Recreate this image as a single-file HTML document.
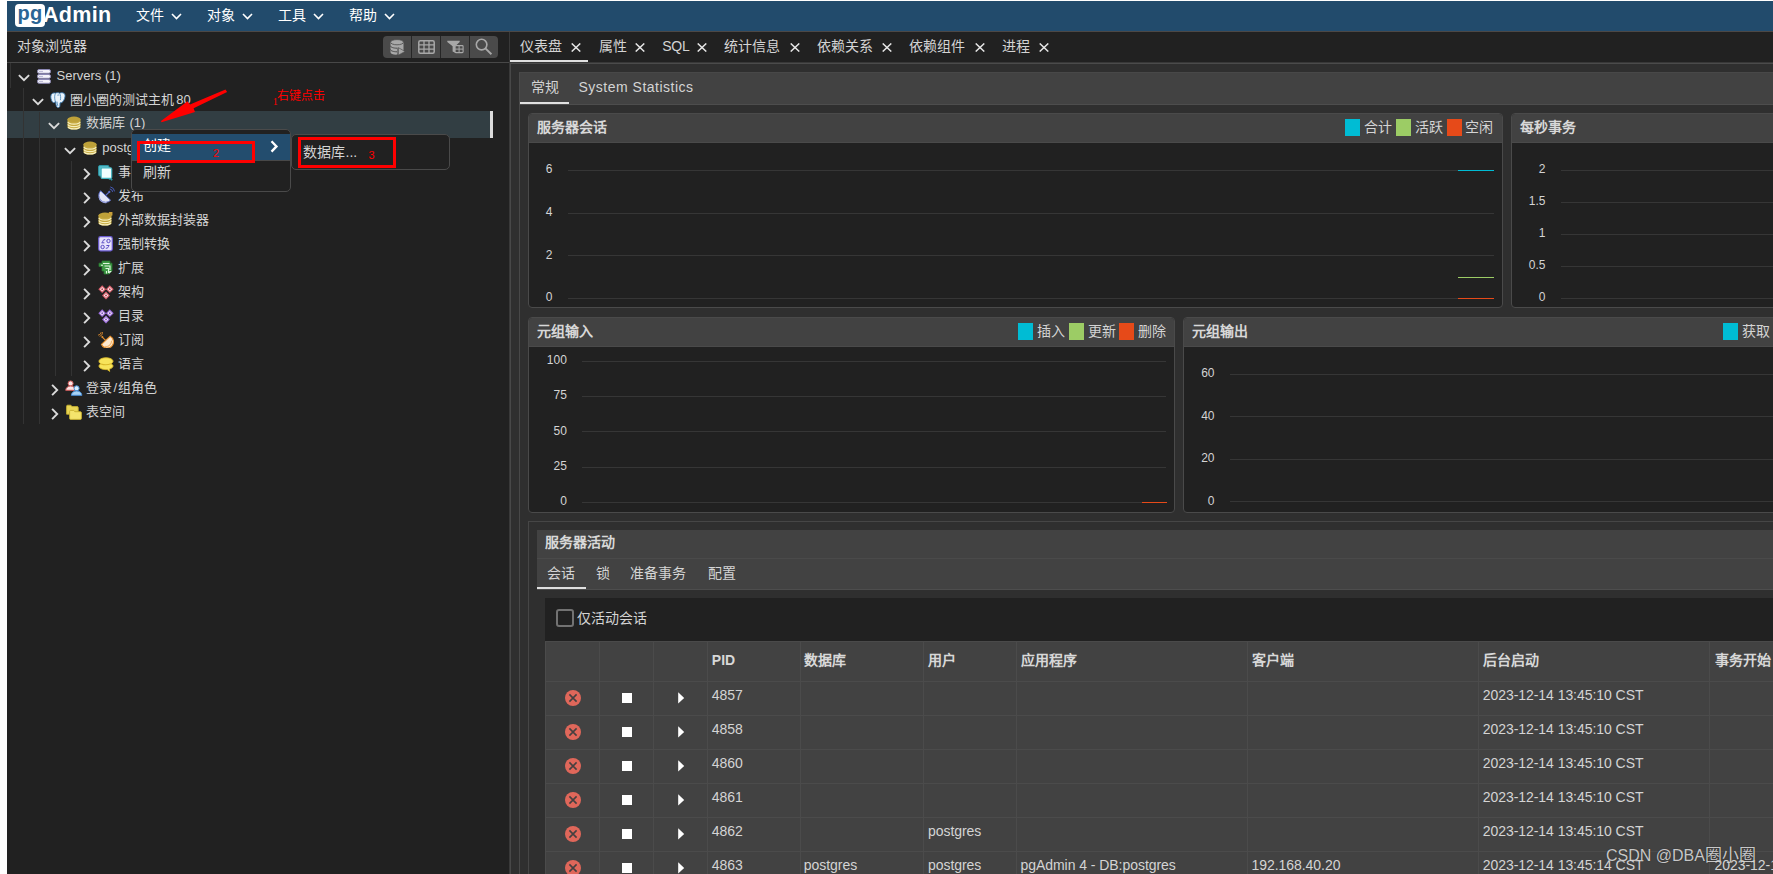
<!DOCTYPE html>
<html lang="zh-CN"><head><meta charset="utf-8"><title>pgAdmin 4</title>
<style>
*{box-sizing:border-box;}
html,body{margin:0;padding:0;background:#ffffff;}
body{width:1773px;height:874px;overflow:hidden;position:relative;font-family:"Liberation Sans",sans-serif;font-size:14px;color:#d4d4d4;line-height:1;}
#app{position:absolute;left:7px;top:1px;width:1766px;height:873px;background:#212121;overflow:hidden;}
#app div,#app span,#app i,#app svg{position:absolute;}
#app b{font-weight:bold;}
/* top nav */
#nav{left:0;top:0;width:1766px;height:31px;background:#224b6c;border-bottom:1px solid #4c4846;z-index:5;}
#logo-box{left:8px;top:3px;width:30px;height:23px;background:#fff;border-radius:4px;}
#logo-pg{left:10.5px;top:-1.5px;font-weight:bold;font-size:20px;line-height:26px;color:#2a6595;letter-spacing:.4px;}
#logo-admin{left:36px;top:2px;font-weight:bold;font-size:21.5px;line-height:24px;color:#fff;letter-spacing:.3px;}
.menu{top:4.5px;height:18px;line-height:18px;font-size:14px;color:#fff;white-space:nowrap;}
.menu svg{top:7px;left:35px;}
/* left panel */
#left{left:0;top:30px;width:502px;height:843px;background:#212121;}
#left-title{left:10px;top:7px;font-size:14px;line-height:16px;color:#d4d4d4;white-space:nowrap;}
#left-hr{left:0;top:31px;width:503px;height:1px;background:#484848;}
#tb{left:376px;top:5px;width:115px;height:22px;background:#4a4a4a;border-radius:4px;overflow:hidden;}
#tb i{top:0;width:1px;height:22px;background:#262626;}
.row{left:0;width:483px;height:24px;line-height:24px;font-size:13px;color:#d4d4d4;white-space:nowrap;}
.row .t{top:0;height:24px;}
.sel{left:0;width:483px;background:#323e43;}
.selbar{width:3px;background:#dcdcdc;}
.guide{width:1px;background:#333;}
/* splitter */
#split{left:502px;top:30px;width:1px;height:843px;background:#393939;}
/* right */
#right{left:503px;top:30px;width:1263px;height:843px;background:#2f2f2f;}
#tabs{left:0;top:0;width:1263px;height:31px;background:#212121;}
#tabline{left:0;top:31px;width:1263px;height:2px;background:#4b4b4b;border-top:1px solid #383838;}
.tab{top:0;height:32px;font-size:14px;line-height:31px;color:#d4d4d4;white-space:nowrap;}
.tab svg{top:11.5px;}
.uline{height:2px;background:#e0e0e0;}
#dashborder{left:0;top:33px;width:1px;height:810px;background:#484848;}
#subtabs{left:9px;top:41px;width:1254px;height:33px;background:#424242;border-left:1px solid #4a4a4a;border-top:1px solid #484848;border-bottom:1px solid #4d4d4d;}
#subline{left:9px;top:74px;width:1px;height:770px;background:#484848;}
.stab{top:0;height:32px;line-height:28px;font-size:14px;white-space:nowrap;color:#d4d4d4;}
.card{background:#212121;border:1px solid #4a4a4a;border-radius:4px;overflow:hidden;}
.card .hd{left:0;top:0;right:0;height:29px;background:#424242;border-bottom:1px solid #4a4a4a;}
.card .ttl{left:8px;top:-1px;font-weight:bold;font-size:14px;line-height:28px;white-space:nowrap;color:#d8d8d8;}
.lg{top:5px;width:15px;height:17px;}
.lt{top:-1px;line-height:28px;font-size:14px;white-space:nowrap;color:#d4d4d4;}
.gl{height:1px;background:#363636;}
.yl{font-size:12px;line-height:14px;height:14px;text-align:right;white-space:nowrap;color:#d4d4d4;}
.sl{height:1px;}
/* activity */
#act{left:17px;top:490px;width:1260px;height:360px;background:#2f2f2f;border:1px solid #464646;}
#acthd{left:8px;top:8px;width:1250px;height:60px;background:#424242;border-bottom:1px solid #4d4d4d;}
#acthd .sep{left:0;top:28px;width:1250px;height:1px;background:#4a4a4a;}
.atab{top:29px;height:29px;line-height:28px;font-size:14px;white-space:nowrap;}
#band{left:16px;top:76px;width:1242px;height:43px;background:#212121;}
#cb{left:11px;top:11.5px;width:18px;height:18px;border:2px solid #727272;border-radius:3px;background:#212121;}
#cbl{left:32px;top:12px;line-height:16px;font-size:14px;white-space:nowrap;}
#tbl{left:16px;top:119px;width:1242px;height:240px;background:#424242;border-top:1px solid #4a4a4a;}
.vl{top:0;width:1px;height:240px;background:#4b4b4b;}
.hl{left:0;width:1242px;height:1px;background:#4b4b4b;}
.th{top:-1px;height:40px;line-height:38px;font-weight:bold;font-size:14px;white-space:nowrap;color:#d8d8d8;}
.td{height:34px;line-height:28px;font-size:14px;white-space:nowrap;color:#d4d4d4;letter-spacing:-.05px;}
.ic-x{width:16px;height:16px;}
.ic-s{width:10px;height:10px;background:#fff;}
/* ctx menu */
.ctx{background:#212121;border:1px solid #4a4a4a;border-radius:5px;overflow:hidden;}
.ctx .it{left:0;height:26px;line-height:26px;font-size:14px;white-space:nowrap;}
.redbox{border:3px solid #ff0000;}
.red{color:#ff0000;white-space:nowrap;}
#wm{font-size:16px;line-height:20px;color:rgba(238,238,238,.82);white-space:nowrap;text-shadow:0 0 1px rgba(0,0,0,.6);}
</style></head><body>
<div id="app">
<div id="nav"><div id="logo-box"></div><div id="logo-pg">pg</div><div id="logo-admin">Admin</div>
<div class="menu" style="left:128.5px">文件<svg width="11" height="7" viewBox="0 0 11 7"><path d="M1 1l4.5 4.5L10 1" fill="none" stroke="#fff" stroke-width="1.6"/></svg></div>
<div class="menu" style="left:199.5px">对象<svg width="11" height="7" viewBox="0 0 11 7"><path d="M1 1l4.5 4.5L10 1" fill="none" stroke="#fff" stroke-width="1.6"/></svg></div>
<div class="menu" style="left:270.5px">工具<svg width="11" height="7" viewBox="0 0 11 7"><path d="M1 1l4.5 4.5L10 1" fill="none" stroke="#fff" stroke-width="1.6"/></svg></div>
<div class="menu" style="left:341.5px">帮助<svg width="11" height="7" viewBox="0 0 11 7"><path d="M1 1l4.5 4.5L10 1" fill="none" stroke="#fff" stroke-width="1.6"/></svg></div>
</div>
<div id="left">
<div id="left-title">对象浏览器</div>
<div id="tb"><i style="left:28px"></i><i style="left:57px"></i><i style="left:86px"></i>
<svg style="left:6.5px;top:2.5px" width="16" height="17" viewBox="0 0 16 17"><path d="M.5 3.2v10c0 1.4 2.4 2.5 5.5 2.5.5 0 1-.1 1.5-.1V8.4l6 3.3V3.2z" fill="#a8a8a8"/><ellipse cx="7" cy="3.2" rx="6.5" ry="2.6" fill="#a8a8a8" stroke="#4a4a4a" stroke-width=".8"/><path d="M.5 6.8c0 1.4 2.9 2.4 6.5 2.4M.5 10.4c0 1.4 2.9 2.4 6.5 2.4" fill="none" stroke="#4a4a4a" stroke-width="1"/><path d="M8.3 8.6l6.7 3.8-6.7 3.8z" fill="#a8a8a8" stroke="#4a4a4a" stroke-width=".6"/></svg>
<svg style="left:35px;top:4px" width="17" height="14" viewBox="0 0 17 14"><rect x=".8" y=".8" width="15.4" height="12.4" rx="1.5" fill="none" stroke="#a8a8a8" stroke-width="1.5"/><path d="M1 4.9h15M1 9.1h15M6 1v12M11 1v12" stroke="#a8a8a8" stroke-width="1.3"/></svg>
<svg style="left:64px;top:4px" width="17" height="15" viewBox="0 0 17 15"><path d="M.3.8h12.4v1.2l-4.5 4.3v6.5l-2.6-1.2V6.3L.3 2z" fill="#a8a8a8"/><rect x="8.1" y="5.6" width="8" height="7" rx=".8" fill="#4a4a4a" stroke="#a8a8a8" stroke-width="1.1"/><path d="M8.1 9.1h8M12.1 5.6v7" stroke="#a8a8a8" stroke-width="1"/></svg>
<svg style="left:92px;top:2.3px" width="18" height="17" viewBox="0 0 18 17"><circle cx="6.6" cy="6.6" r="5.3" fill="none" stroke="#a8a8a8" stroke-width="1.6"/><path d="M10.4 10.4l6 5.8" stroke="#a8a8a8" stroke-width="1.9"/></svg>
</div>
<div id="left-hr"></div>
<div class="sel" style="top:80px;height:26.5px"></div>
<div class="selbar" style="left:483px;top:80px;height:26.5px"></div>
<div class="guide" style="left:2.5px;top:32px;height:25px"></div>
<div class="guide" style="left:16px;top:57px;height:336px"></div>
<div class="guide" style="left:32px;top:81px;height:312px"></div>
<div class="guide" style="left:48px;top:106.5px;height:238.5px"></div>
<div class="guide" style="left:64px;top:130px;height:215px"></div>
<div class="row" style="top:32.5px">
<svg style="left:11px;top:10.5px" width="12" height="8" viewBox="0 0 12 8"><path d="M.9 1.1l5.1 5.1 5.1-5.1" fill="none" stroke="#dadada" stroke-width="1.9"/></svg>
<svg style="left:30px;top:5px" width="14" height="15" viewBox="0 0 14 15"><g fill="#f4f3fa" stroke="#8b87b3" stroke-width="1"><rect x=".5" y=".5" width="13" height="3.8" rx="1.6"/><rect x=".5" y="5.5" width="13" height="3.8" rx="1.6"/><rect x=".5" y="10.5" width="13" height="3.8" rx="1.6"/></g><g fill="#b9b6d3"><rect x="2" y="1.9" width="4" height="1"/><rect x="2" y="6.9" width="4" height="1"/><rect x="2" y="11.9" width="4" height="1"/></g></svg>
<span class="t" style="left:49.5px;top:0px">Servers (1)</span>
</div>
<div class="row" style="top:56.5px">
<svg style="left:25px;top:10.5px" width="12" height="8" viewBox="0 0 12 8"><path d="M.9 1.1l5.1 5.1 5.1-5.1" fill="none" stroke="#dadada" stroke-width="1.9"/></svg>
<svg style="left:43px;top:4px" width="16" height="16" viewBox="0 0 16 16"><path d="M2.2 1.6C.6 2.6.4 5.6 1.6 8.4c.7 1.6 1.7 2.4 2.6 2.2.5-.1.8-.6 1-1.2l.6.3c0 1.6.2 3.6.8 4.8.4.8 1.4 1.3 2.3.9.8-.4 1-1.2 1-2.2l.1-2.4c1.2.1 2.2-.3 2.9-1.2 1.4-1.8 2.3-4.6 2.1-6.4C14.8 1.4 13.4.7 11.8.7c-.9 0-1.6.2-2.2.5C8.9.8 8.1.7 7.4.7c-.8 0-1.5.2-2.1.5C4.3.8 3.1.9 2.2 1.6z" fill="#e9f3fb" stroke="#3f7fb5" stroke-width=".9"/><path d="M5.4 1.5c-.9 1.8-1 4.5-.2 7.6M9.7 1.4c1 1.7 1.2 4.3.7 6.7M7.4 3.2c.6-.3 1.3-.3 1.8.1M7 9.6c.2 1.6.4 3 .9 4.3" fill="none" stroke="#3f7fb5" stroke-width=".8"/></svg>
<span class="t" style="left:63px;top:0px">圈小圈的测试主机</span>
<span class="t" style="left:169.3px;top:0px">80</span>
</div>
<div class="row" style="top:80.5px">
<svg style="left:41px;top:10.5px" width="12" height="8" viewBox="0 0 12 8"><path d="M.9 1.1l5.1 5.1 5.1-5.1" fill="none" stroke="#dadada" stroke-width="1.9"/></svg>
<svg style="left:59.8px;top:4.7px" width="14" height="14.5" viewBox="0 0 14 14.5"><path d="M.5 3.5v7.4c0 1.5 2.9 2.6 6.5 2.6s6.5-1.1 6.5-2.6V3.5z" fill="#c6a941"/><path d="M.9 5.9c.4 1.3 2.9 2.2 6.1 2.2s5.7-.9 6.1-2.2M.9 8.4c.4 1.3 2.9 2.2 6.1 2.2s5.7-.9 6.1-2.2M1.1 10.9c.6 1.2 3 2 5.9 2s5.3-.8 5.9-2" fill="none" stroke="#f7efbc" stroke-width="1.250"/><ellipse cx="7" cy="3.3" rx="6.5" ry="2.7" fill="#bea139"/></svg>
<span class="t" style="left:79.2px;top:-0.3px">数据库</span>
<span class="t" style="left:122.5px;top:-0.3px">(1)</span>
</div>
<div class="row" style="top:105px">
<svg style="left:57px;top:10.5px" width="12" height="8" viewBox="0 0 12 8"><path d="M.9 1.1l5.1 5.1 5.1-5.1" fill="none" stroke="#dadada" stroke-width="1.9"/></svg>
<svg style="left:75.8px;top:4.7px" width="14" height="14.5" viewBox="0 0 14 14.5"><path d="M.5 3.5v7.4c0 1.5 2.9 2.6 6.5 2.6s6.5-1.1 6.5-2.6V3.5z" fill="#c6a941"/><path d="M.9 5.9c.4 1.3 2.9 2.2 6.1 2.2s5.7-.9 6.1-2.2M.9 8.4c.4 1.3 2.9 2.2 6.1 2.2s5.7-.9 6.1-2.2M1.1 10.9c.6 1.2 3 2 5.9 2s5.3-.8 5.9-2" fill="none" stroke="#f7efbc" stroke-width="1.250"/><ellipse cx="7" cy="3.3" rx="6.5" ry="2.7" fill="#bea139"/></svg>
<span class="t" style="left:95.3px;top:0px">postgres</span>
</div>
<div class="row" style="top:129px">
<svg style="left:75.9px;top:8px" width="8" height="12" viewBox="0 0 8 12"><path d="M1.1 .9l5.1 5.1-5.1 5.1" fill="none" stroke="#dadada" stroke-width="1.9"/></svg>
<svg style="left:91.3px;top:4.5px" width="15" height="16" viewBox="0 0 15 16"><rect x=".6" y=".6" width="10.4" height="10.4" rx="1.2" fill="#58bcc9" stroke="#2b97a5" stroke-width="1"/><rect x="3.1" y="2.8" width="10.6" height="10.6" rx="1.2" fill="#effeff" stroke="#43b3c0" stroke-width="1.2"/><path d="M10.8 14.3h2.4v-1.3l1.6 1.8-1.6 1.2v-.9h-2.4z" fill="#2b97a5"/></svg>
<span class="t" style="left:111.3px;top:0px">事件触发器</span>
</div>
<div class="row" style="top:153px">
<svg style="left:75.9px;top:8px" width="8" height="12" viewBox="0 0 8 12"><path d="M1.1 .9l5.1 5.1-5.1 5.1" fill="none" stroke="#dadada" stroke-width="1.9"/></svg>
<svg style="left:90.0px;top:1.5px" width="18" height="18" viewBox="0 0 18 18"><path d="M3.6 4.8A6.8 6.8 0 1 0 13.6 14.2z" fill="#e3e5f5" stroke="#5b6cc4" stroke-width="1"/><path d="M2.2 10.8a6 6 0 0 0 7.4 5.6" fill="none" stroke="#9aa3dc" stroke-width="1.3"/><path d="M8.8 9.4l3.4-3.4" stroke="#5b6cc4" stroke-width="1.2"/><circle cx="12.3" cy="5.9" r="1.1" fill="#5b6cc4"/><path d="M12.8 3a3.2 3.2 0 0 1 2.8 2.9M13.3.9a5.4 5.4 0 0 1 4.3 4.5" fill="none" stroke="#4d62c8" stroke-width=".9"/></svg>
<span class="t" style="left:111.3px;top:0px">发布</span>
</div>
<div class="row" style="top:177px">
<svg style="left:75.9px;top:8px" width="8" height="12" viewBox="0 0 8 12"><path d="M1.1 .9l5.1 5.1-5.1 5.1" fill="none" stroke="#dadada" stroke-width="1.9"/></svg>
<svg style="left:91.3px;top:4.2px" width="15" height="14.5" viewBox="0 0 15 14.5"><path d="M.5 3.5v7.4c0 1.5 2.9 2.6 6.5 2.6s6.5-1.1 6.5-2.6V3.5z" fill="#c6a941"/><path d="M.9 5.9c.4 1.3 2.9 2.2 6.1 2.2s5.7-.9 6.1-2.2M.9 8.4c.4 1.3 2.9 2.2 6.1 2.2s5.7-.9 6.1-2.2M1.1 10.9c.6 1.2 3 2 5.9 2s5.3-.8 5.9-2" fill="none" stroke="#f7efbc" stroke-width="1.250"/><ellipse cx="7" cy="3.3" rx="6.5" ry="2.7" fill="#bea139"/><path d="M9.8 3.6L13.3.7M10.8.5h2.9v2.9" fill="none" stroke="#c9a03a" stroke-width="1.5"/></svg>
<span class="t" style="left:111.3px;top:0px">外部数据封装器</span>
</div>
<div class="row" style="top:201px">
<svg style="left:75.9px;top:8px" width="8" height="12" viewBox="0 0 8 12"><path d="M1.1 .9l5.1 5.1-5.1 5.1" fill="none" stroke="#dadada" stroke-width="1.9"/></svg>
<svg style="left:91.3px;top:4px" width="15" height="16" viewBox="0 0 15 16"><rect x=".7" y=".7" width="13.6" height="14.2" rx="1.8" fill="#e7e2fb" stroke="#6a5bd0" stroke-width="1.2"/><circle cx="10.5" cy="5" r="1.7" fill="none" stroke="#5a4cc4" stroke-width="1"/><circle cx="4.6" cy="11" r="1.7" fill="none" stroke="#5a4cc4" stroke-width="1"/><path d="M7.2 3.6c-2 0-2.6 1.2-2.6 2.8M3.4 6.8h3M8.4 9.5h3M7.8 12.3c2 0 2.8-1 2.8-2.6" fill="none" stroke="#5a4cc4" stroke-width="1"/></svg>
<span class="t" style="left:111.3px;top:0px">强制转换</span>
</div>
<div class="row" style="top:225px">
<svg style="left:75.9px;top:8px" width="8" height="12" viewBox="0 0 8 12"><path d="M1.1 .9l5.1 5.1-5.1 5.1" fill="none" stroke="#dadada" stroke-width="1.9"/></svg>
<svg style="left:91.3px;top:4px" width="15" height="16" viewBox="0 0 15 16"><path d="M1 3.2h3V1h8v2.2h2v7.6l-3 3.2H6v-3H4V6.5H1z" fill="#3f9a46" stroke="#2a7a31" stroke-width=".8"/><path d="M5 3.5h6.5M3 5.2h2M6.5 6h5.5v4M7.5 8.5h3v4.5M8.5 11v2.5" fill="none" stroke="#dff5df" stroke-width="1.1"/><path d="M11.2 13.8l2.6-2.8h-2.6z" fill="#e8f8e8"/></svg>
<span class="t" style="left:111.3px;top:0px">扩展</span>
</div>
<div class="row" style="top:249px">
<svg style="left:75.9px;top:8px" width="8" height="12" viewBox="0 0 8 12"><path d="M1.1 .9l5.1 5.1-5.1 5.1" fill="none" stroke="#dadada" stroke-width="1.9"/></svg>
<svg style="left:91.3px;top:4.5px" width="16" height="15" viewBox="0 0 16 15"><path d="M4.2 0.30000000000000027l3.9 3.9-3.9 3.9-3.9-3.9z" fill="#d9606c"/><path d="M4.2 1.9000000000000004l2.3 2.3-2.3 2.3-2.3-2.3z" fill="#fdf1f3"/><circle cx="4.2" cy="4.2" r=".950" fill="#b8424f"/><path d="M11.8 0.30000000000000027l3.9 3.9-3.9 3.9-3.9-3.9z" fill="#d9606c"/><path d="M11.8 1.9000000000000004l2.3 2.3-2.3 2.3-2.3-2.3z" fill="#fdf1f3"/><circle cx="11.8" cy="4.2" r=".950" fill="#b8424f"/><path d="M8 6.6l3.9 3.9-3.9 3.9-3.9-3.9z" fill="#d9606c"/><path d="M8 8.2l2.3 2.3-2.3 2.3-2.3-2.3z" fill="#fdf1f3"/><circle cx="8" cy="10.5" r=".950" fill="#b8424f"/></svg>
<span class="t" style="left:111.3px;top:0px">架构</span>
</div>
<div class="row" style="top:273px">
<svg style="left:75.9px;top:8px" width="8" height="12" viewBox="0 0 8 12"><path d="M1.1 .9l5.1 5.1-5.1 5.1" fill="none" stroke="#dadada" stroke-width="1.9"/></svg>
<svg style="left:91.3px;top:4.5px" width="16" height="15" viewBox="0 0 16 15"><path d="M4.2 0.30000000000000027l3.9 3.9-3.9 3.9-3.9-3.9z" fill="#9a6ddb"/><path d="M4.2 1.9000000000000004l2.3 2.3-2.3 2.3-2.3-2.3z" fill="#fdf1f3"/><circle cx="4.2" cy="4.2" r=".950" fill="#7a4bc4"/><path d="M11.8 0.30000000000000027l3.9 3.9-3.9 3.9-3.9-3.9z" fill="#9a6ddb"/><path d="M11.8 1.9000000000000004l2.3 2.3-2.3 2.3-2.3-2.3z" fill="#fdf1f3"/><circle cx="11.8" cy="4.2" r=".950" fill="#7a4bc4"/><path d="M8 6.6l3.9 3.9-3.9 3.9-3.9-3.9z" fill="#9a6ddb"/><path d="M8 8.2l2.3 2.3-2.3 2.3-2.3-2.3z" fill="#fdf1f3"/><circle cx="8" cy="10.5" r=".950" fill="#7a4bc4"/></svg>
<span class="t" style="left:111.3px;top:0px">目录</span>
</div>
<div class="row" style="top:297px">
<svg style="left:75.9px;top:8px" width="8" height="12" viewBox="0 0 8 12"><path d="M1.1 .9l5.1 5.1-5.1 5.1" fill="none" stroke="#dadada" stroke-width="1.9"/></svg>
<svg style="left:90.3px;top:3px" width="17" height="17" viewBox="0 0 17 17"><path d="M13.2 5.2A6.3 6.3 0 1 1 4.5 13.4z" fill="#fde9cf" stroke="#e8902c" stroke-width="1.1"/><path d="M14.6 9.8a5.5 5.5 0 0 1-6.4 5.6" fill="none" stroke="#f2b36b" stroke-width="1.2"/><path d="M8.6 9.4L5.5 6.3" stroke="#e8902c" stroke-width="1.1"/><circle cx="5.3" cy="6" r="1" fill="#e8902c"/><path d="M1 4.2a3.6 3.6 0 0 0 3.2-3M2.6 5.4a4 4 0 0 0 2.9-4.4" fill="none" stroke="#e8902c" stroke-width=".8"/></svg>
<span class="t" style="left:111.3px;top:0px">订阅</span>
</div>
<div class="row" style="top:321px">
<svg style="left:75.9px;top:8px" width="8" height="12" viewBox="0 0 8 12"><path d="M1.1 .9l5.1 5.1-5.1 5.1" fill="none" stroke="#dadada" stroke-width="1.9"/></svg>
<svg style="left:91.3px;top:4.5px" width="16" height="15" viewBox="0 0 16 15"><path d="M8 .8c3.9 0 7 1.5 7 3.5 0 1-.8 1.8-2 2.5 1.1.5 2 1.3 2 2.2 0 1.4-1.5 2.5-3.7 3.1l.4 2.3-2.6-1.9c-.4 0-.7.1-1.1.1-3.9 0-7-1.5-7-3.5 0-.9.7-1.7 1.8-2.3C1.7 6.2 1 5.3 1 4.3 1 2.3 4.1.8 8 .8z" fill="#f7e45a" stroke="#d9b92a" stroke-width=".9"/><path d="M3 6.9c2.8 1 7 1 10-.1" fill="none" stroke="#d9b92a" stroke-width="1.1"/></svg>
<span class="t" style="left:111.3px;top:0px">语言</span>
</div>
<div class="row" style="top:345px">
<svg style="left:43.7px;top:8px" width="8" height="12" viewBox="0 0 8 12"><path d="M1.1 .9l5.1 5.1-5.1 5.1" fill="none" stroke="#dadada" stroke-width="1.9"/></svg>
<svg style="left:58.3px;top:4px" width="18" height="16" viewBox="0 0 18 16"><circle cx="5.6" cy="3.4" r="2.5" fill="#fbe3e3" stroke="#d25b5b" stroke-width="1"/><path d="M.7 10.3c.3-2.7 2.2-4.3 4.9-4.3s4.6 1.6 4.9 4.3z" fill="#fbe3e3" stroke="#d25b5b" stroke-width="1"/><circle cx="11.6" cy="8.3" r="2.5" fill="#d9ecfb" stroke="#4a90d9" stroke-width="1"/><path d="M6.3 15.3c.3-2.8 2.4-4.4 5.3-4.4s5 1.6 5.3 4.4z" fill="#a9d3f5" stroke="#4a90d9" stroke-width="1"/></svg>
<span class="t" style="left:79.2px;top:0px">登录</span>
<span class="t" style="left:106.4px;top:0px">/</span>
<span class="t" style="left:111.4px;top:0px">组角色</span>
</div>
<div class="row" style="top:369px">
<svg style="left:43.7px;top:8px" width="8" height="12" viewBox="0 0 8 12"><path d="M1.1 .9l5.1 5.1-5.1 5.1" fill="none" stroke="#dadada" stroke-width="1.9"/></svg>
<svg style="left:58.8px;top:4px" width="16" height="16" viewBox="0 0 16 16"><path d="M.6 2.2c0-.6.4-1 1-1h3.2l1.2 1.4h5.2c.6 0 1 .4 1 1v6.6H.6z" fill="#e9d655" stroke="#c7b02f" stroke-width=".9"/><path d="M3.6 7.4c0-.6.4-1 1-1h3l1.2 1.3h5.6c.6 0 1 .4 1 1v5.7c0 .6-.4 1-1 1H4.6c-.6 0-1-.4-1-1z" fill="#f4e46c" stroke="#c7b02f" stroke-width=".9"/></svg>
<span class="t" style="left:79.2px;top:0px">表空间</span>
</div>
</div>
<div id="split"></div>
<div id="right">
<div id="tabs">
<div class="tab" style="left:9.7px">仪表盘</div>
<div class="tab" style="left:61.2px"><svg width="10" height="9" viewBox="0 0 10 9"><path d="M.7.4l8.6 8.2M9.3.4L.7 8.6" stroke="#e6e6e6" stroke-width="1.4" fill="none"/></svg></div>
<div class="tab" style="left:88.5px">属性</div>
<div class="tab" style="left:125.2px"><svg width="10" height="9" viewBox="0 0 10 9"><path d="M.7.4l8.6 8.2M9.3.4L.7 8.6" stroke="#e6e6e6" stroke-width="1.4" fill="none"/></svg></div>
<div class="tab" style="left:152.2px;letter-spacing:-.2px">SQL</div>
<div class="tab" style="left:187.2px"><svg width="10" height="9" viewBox="0 0 10 9"><path d="M.7.4l8.6 8.2M9.3.4L.7 8.6" stroke="#e6e6e6" stroke-width="1.4" fill="none"/></svg></div>
<div class="tab" style="left:214.1px">统计信息</div>
<div class="tab" style="left:280.2px"><svg width="10" height="9" viewBox="0 0 10 9"><path d="M.7.4l8.6 8.2M9.3.4L.7 8.6" stroke="#e6e6e6" stroke-width="1.4" fill="none"/></svg></div>
<div class="tab" style="left:307.1px">依赖关系</div>
<div class="tab" style="left:371.8px"><svg width="10" height="9" viewBox="0 0 10 9"><path d="M.7.4l8.6 8.2M9.3.4L.7 8.6" stroke="#e6e6e6" stroke-width="1.4" fill="none"/></svg></div>
<div class="tab" style="left:399.1px">依赖组件</div>
<div class="tab" style="left:465.3px"><svg width="10" height="9" viewBox="0 0 10 9"><path d="M.7.4l8.6 8.2M9.3.4L.7 8.6" stroke="#e6e6e6" stroke-width="1.4" fill="none"/></svg></div>
<div class="tab" style="left:492.1px">进程</div>
<div class="tab" style="left:529.2px"><svg width="10" height="9" viewBox="0 0 10 9"><path d="M.7.4l8.6 8.2M9.3.4L.7 8.6" stroke="#e6e6e6" stroke-width="1.4" fill="none"/></svg></div>
<div class="uline" style="left:0;top:29px;width:78px"></div>
</div>
<div id="tabline"></div><div id="dashborder"></div>
<div id="subtabs">
<div class="stab" style="left:10.700000000000045px">常规</div>
<div class="stab" style="left:58.5px;letter-spacing:.5px">System Statistics</div>
<div class="uline" style="left:0;top:29px;width:49px"></div>
</div>
<div id="subline"></div>
<div class="card" style="left:18px;top:82px;width:975px;height:195px">
<div class="hd"><div class="ttl">服务器会话</div>
<div class="lg" style="left:816px;background:#00bcd4"></div><div class="lt" style="left:835px">合计</div>
<div class="lg" style="left:867px;background:#9ccc65"></div><div class="lt" style="left:885.6px">活跃</div>
<div class="lg" style="left:917.5px;background:#e64a19"></div><div class="lt" style="left:936px">空闲</div>
</div>
<div class="gl" style="left:39px;top:55.9px;width:926px"></div>
<div class="yl" style="left:-16.5px;width:40px;top:48.4px">6</div>
<div class="gl" style="left:39px;top:98.7px;width:926px"></div>
<div class="yl" style="left:-16.5px;width:40px;top:91.2px">4</div>
<div class="gl" style="left:39px;top:141.1px;width:926px"></div>
<div class="yl" style="left:-16.5px;width:40px;top:133.6px">2</div>
<div class="gl" style="left:39px;top:183.7px;width:926px"></div>
<div class="yl" style="left:-16.5px;width:40px;top:176.2px">0</div>
<div class="sl" style="left:929px;top:55.9px;width:36px;background:#00bcd4"></div>
<div class="sl" style="left:929px;top:162.8px;width:36px;background:#9ccc65"></div>
<div class="sl" style="left:929px;top:183.7px;width:36px;background:#e64a19"></div>
</div>
<div class="card" style="left:1001px;top:82px;width:279px;height:195px">
<div class="hd"><div class="ttl">每秒事务</div>
</div>
<div class="gl" style="left:49px;top:55.9px;width:229px"></div>
<div class="yl" style="left:-6.5px;width:40px;top:48.4px">2</div>
<div class="gl" style="left:49px;top:87.8px;width:229px"></div>
<div class="yl" style="left:-6.5px;width:40px;top:80.3px">1.5</div>
<div class="gl" style="left:49px;top:119.8px;width:229px"></div>
<div class="yl" style="left:-6.5px;width:40px;top:112.3px">1</div>
<div class="gl" style="left:49px;top:151.7px;width:229px"></div>
<div class="yl" style="left:-6.5px;width:40px;top:144.2px">0.5</div>
<div class="gl" style="left:49px;top:183.7px;width:229px"></div>
<div class="yl" style="left:-6.5px;width:40px;top:176.2px">0</div>
</div>
<div class="card" style="left:18px;top:286px;width:647px;height:195.5px">
<div class="hd"><div class="ttl">元组输入</div>
<div class="lg" style="left:489px;background:#00bcd4"></div><div class="lt" style="left:507.5px">插入</div>
<div class="lg" style="left:540px;background:#9ccc65"></div><div class="lt" style="left:558.5px">更新</div>
<div class="lg" style="left:590px;background:#e64a19"></div><div class="lt" style="left:608.7px">删除</div>
</div>
<div class="gl" style="left:53.3px;top:42.9px;width:584.2px"></div>
<div class="yl" style="left:-2.2px;width:40px;top:35.4px">100</div>
<div class="gl" style="left:53.3px;top:77.8px;width:584.2px"></div>
<div class="yl" style="left:-2.2px;width:40px;top:70.3px">75</div>
<div class="gl" style="left:53.3px;top:113.3px;width:584.2px"></div>
<div class="yl" style="left:-2.2px;width:40px;top:105.8px">50</div>
<div class="gl" style="left:53.3px;top:148.5px;width:584.2px"></div>
<div class="yl" style="left:-2.2px;width:40px;top:141px">25</div>
<div class="gl" style="left:53.3px;top:183.7px;width:584.2px"></div>
<div class="yl" style="left:-2.2px;width:40px;top:176.2px">0</div>
<div class="sl" style="left:613px;top:183.7px;width:24.5px;background:#e64a19"></div>
</div>
<div class="card" style="left:673px;top:286px;width:607px;height:195.5px">
<div class="hd"><div class="ttl">元组输出</div>
<div class="lg" style="left:539.3px;background:#00bcd4"></div><div class="lt" style="left:558px">获取</div>
</div>
<div class="gl" style="left:46px;top:55.8px;width:560px"></div>
<div class="yl" style="left:-9.5px;width:40px;top:48.3px">60</div>
<div class="gl" style="left:46px;top:98.4px;width:560px"></div>
<div class="yl" style="left:-9.5px;width:40px;top:90.9px">40</div>
<div class="gl" style="left:46px;top:140.8px;width:560px"></div>
<div class="yl" style="left:-9.5px;width:40px;top:133.3px">20</div>
<div class="gl" style="left:46px;top:183.4px;width:560px"></div>
<div class="yl" style="left:-9.5px;width:40px;top:175.9px">0</div>
</div>
<div id="act" style="left:18px;top:489.5px">
<div id="acthd"><div class="ttl" style="left:8px;top:-1.5px;font-weight:bold;line-height:28px;white-space:nowrap;color:#d8d8d8">服务器活动</div><div class="sep"></div>
<div class="atab" style="left:10.2px">会话</div>
<div class="atab" style="left:58.5px">锁</div>
<div class="atab" style="left:93.2px">准备事务</div>
<div class="atab" style="left:170.5px">配置</div>
<div class="uline" style="left:0;top:57px;width:48.5px"></div>
</div>
<div id="band"><div id="cb"></div><div id="cbl">仅活动会话</div></div>
<div id="tbl">
<div class="vl" style="left:0.0px"></div>
<div class="vl" style="left:53.8px"></div>
<div class="vl" style="left:107.9px"></div>
<div class="vl" style="left:162.1px"></div>
<div class="vl" style="left:254.9px"></div>
<div class="vl" style="left:378.0px"></div>
<div class="vl" style="left:470.7px"></div>
<div class="vl" style="left:701.9px"></div>
<div class="vl" style="left:933.3px"></div>
<div class="vl" style="left:1164.4px"></div>
<div class="hl" style="top:39.0px"></div>
<div class="hl" style="top:73.0px"></div>
<div class="hl" style="top:107.0px"></div>
<div class="hl" style="top:141.0px"></div>
<div class="hl" style="top:175.0px"></div>
<div class="hl" style="top:209.0px"></div>
<div class="th" style="left:166.8px">PID</div>
<div class="th" style="left:258.8px">数据库</div>
<div class="th" style="left:383.0px">用户</div>
<div class="th" style="left:475.5px">应用程序</div>
<div class="th" style="left:706.5px">客户端</div>
<div class="th" style="left:937.7px">后台启动</div>
<div class="th" style="left:1169.5px">事务开始</div>
<svg style="left:20px;top:48.5px" class="ic-x" viewBox="0 0 16 16"><circle cx="8" cy="8" r="8" fill="#e0675a"/><path d="M4.4 4.4l7.2 7.2M11.6 4.4l-7.2 7.2" stroke="#454040" stroke-width="1.6" fill="none"/></svg>
<div class="ic-s" style="left:77px;top:51.5px"></div>
<svg style="left:133px;top:50.5px" width="7" height="12" viewBox="0 0 7 12"><path d="M.2.2l6 5.7-6 5.7z" fill="#fff"/></svg>
<div class="td" style="left:166.8px;top:39.5px">4857</div>
<div class="td" style="left:937.7px;top:39.5px">2023-12-14 13:45:10 CST</div>
<svg style="left:20px;top:82.5px" class="ic-x" viewBox="0 0 16 16"><circle cx="8" cy="8" r="8" fill="#e0675a"/><path d="M4.4 4.4l7.2 7.2M11.6 4.4l-7.2 7.2" stroke="#454040" stroke-width="1.6" fill="none"/></svg>
<div class="ic-s" style="left:77px;top:85.5px"></div>
<svg style="left:133px;top:84.5px" width="7" height="12" viewBox="0 0 7 12"><path d="M.2.2l6 5.7-6 5.7z" fill="#fff"/></svg>
<div class="td" style="left:166.8px;top:73.5px">4858</div>
<div class="td" style="left:937.7px;top:73.5px">2023-12-14 13:45:10 CST</div>
<svg style="left:20px;top:116.5px" class="ic-x" viewBox="0 0 16 16"><circle cx="8" cy="8" r="8" fill="#e0675a"/><path d="M4.4 4.4l7.2 7.2M11.6 4.4l-7.2 7.2" stroke="#454040" stroke-width="1.6" fill="none"/></svg>
<div class="ic-s" style="left:77px;top:119.5px"></div>
<svg style="left:133px;top:118.5px" width="7" height="12" viewBox="0 0 7 12"><path d="M.2.2l6 5.7-6 5.7z" fill="#fff"/></svg>
<div class="td" style="left:166.8px;top:107.5px">4860</div>
<div class="td" style="left:937.7px;top:107.5px">2023-12-14 13:45:10 CST</div>
<svg style="left:20px;top:150.5px" class="ic-x" viewBox="0 0 16 16"><circle cx="8" cy="8" r="8" fill="#e0675a"/><path d="M4.4 4.4l7.2 7.2M11.6 4.4l-7.2 7.2" stroke="#454040" stroke-width="1.6" fill="none"/></svg>
<div class="ic-s" style="left:77px;top:153.5px"></div>
<svg style="left:133px;top:152.5px" width="7" height="12" viewBox="0 0 7 12"><path d="M.2.2l6 5.7-6 5.7z" fill="#fff"/></svg>
<div class="td" style="left:166.8px;top:141.5px">4861</div>
<div class="td" style="left:937.7px;top:141.5px">2023-12-14 13:45:10 CST</div>
<svg style="left:20px;top:184.5px" class="ic-x" viewBox="0 0 16 16"><circle cx="8" cy="8" r="8" fill="#e0675a"/><path d="M4.4 4.4l7.2 7.2M11.6 4.4l-7.2 7.2" stroke="#454040" stroke-width="1.6" fill="none"/></svg>
<div class="ic-s" style="left:77px;top:187.5px"></div>
<svg style="left:133px;top:186.5px" width="7" height="12" viewBox="0 0 7 12"><path d="M.2.2l6 5.7-6 5.7z" fill="#fff"/></svg>
<div class="td" style="left:166.8px;top:175.5px">4862</div>
<div class="td" style="left:383.0px;top:175.5px">postgres</div>
<div class="td" style="left:937.7px;top:175.5px">2023-12-14 13:45:10 CST</div>
<svg style="left:20px;top:218.5px" class="ic-x" viewBox="0 0 16 16"><circle cx="8" cy="8" r="8" fill="#e0675a"/><path d="M4.4 4.4l7.2 7.2M11.6 4.4l-7.2 7.2" stroke="#454040" stroke-width="1.6" fill="none"/></svg>
<div class="ic-s" style="left:77px;top:221.5px"></div>
<svg style="left:133px;top:220.5px" width="7" height="12" viewBox="0 0 7 12"><path d="M.2.2l6 5.7-6 5.7z" fill="#fff"/></svg>
<div class="td" style="left:166.8px;top:209.5px">4863</div>
<div class="td" style="left:258.8px;top:209.5px">postgres</div>
<div class="td" style="left:383.0px;top:209.5px">postgres</div>
<div class="td" style="left:475.5px;top:209.5px">pgAdmin 4 - DB:postgres</div>
<div class="td" style="left:706.5px;top:209.5px">192.168.40.20</div>
<div class="td" style="left:937.7px;top:209.5px">2023-12-14 13:45:14 CST</div>
<div class="td" style="left:1169.5px;top:209.5px">2023-12-14 13:45:14 CST</div>
</div>
</div>
</div>
<div class="ctx" style="left:124px;top:128px;width:160px;height:63px">
<div class="it" style="top:3.5px;width:158px;background:#234d6e;color:#fff"><span style="left:11px;top:-1.5px">创建</span><svg style="left:138.3px;top:6px" width="9" height="13" viewBox="0 0 9 13"><path d="M1.5 1.2l5 5.2-5 5.2" fill="none" stroke="#fff" stroke-width="2.3"/></svg></div>
<div style="left:0;top:30px;width:158px;height:1px;background:#484848"></div>
<div class="it" style="top:30px;width:158px"><span style="left:11px;top:-1px">刷新</span></div>
</div>
<div class="ctx" style="left:284px;top:133px;width:159px;height:36px">
<div class="it" style="top:3.5px;width:157px"><span style="left:11px;top:0">数据库</span><span style="left:53.5px;top:0">...</span></div>
</div>
<div class="redbox" style="left:130px;top:140px;width:118px;height:22px"></div>
<div class="redbox" style="left:291px;top:136px;width:97.5px;height:31px"></div>
<div class="red" style="left:206px;top:146px;font-size:11px;line-height:12px">2</div>
<div class="red" style="left:361.5px;top:148px;font-size:11px;line-height:12px">3</div>
<div class="red" style="left:265.8px;top:95.3px;font-size:10px;line-height:11px;font-family:'Liberation Serif',serif">1</div>
<div class="red" style="left:270.2px;top:88px;font-size:12px;line-height:14px">右键点击</div>
<svg style="left:148px;top:84px" width="80" height="45" viewBox="155 85 80 45"><path d="M225.5 89.5l1.6 2.6-33.5 16.2 1.4 3.7-33.5 10.3-.5-1.2 26.5-19.9 2.5 3.3z" fill="#ff0000"/></svg>
<div id="wm" style="left:1599px;top:845px">CSDN @DBA<span style="left:99px;top:-.5px;font-size:17px">圈小圈</span></div>
</div>
</body></html>
